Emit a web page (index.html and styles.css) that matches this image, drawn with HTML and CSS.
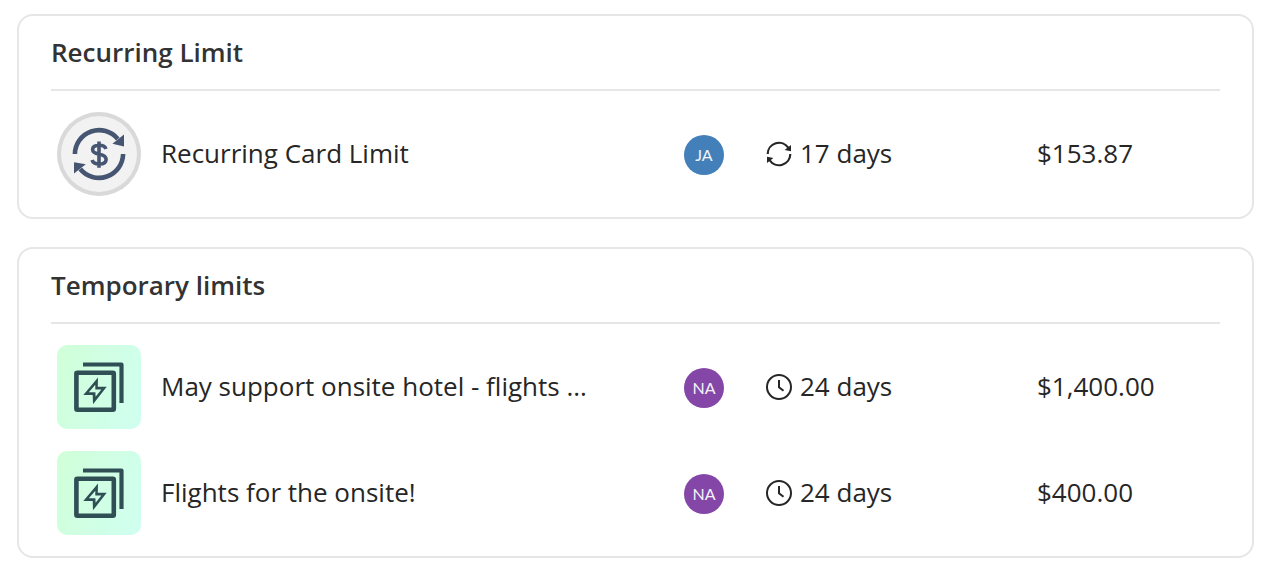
FILE: index.html
```html
<!DOCTYPE html>
<html lang="en">
<head>
<meta charset="utf-8">
<title>Card limits</title>
<meta name="viewport" content="width=device-width, initial-scale=1">
<link rel="stylesheet" href="styles.css">
</head>
<body>
<svg class="sprite" aria-hidden="true">
  <symbol id="cycle" viewBox="0 0 28 28">
    <path d="M2.7 14A11.3 11.3 0 0 1 23.4 7.8M25.3 14A11.3 11.3 0 0 1 4.6 20.2" fill="none" stroke="currentColor" stroke-width="2.2"/>
    <path d="M26 5v6.2l-6.4-1.2zM2 23v-6.2l6.4 1.2z" fill="currentColor"/>
  </symbol>
  <symbol id="clock" viewBox="0 0 28 28">
    <g fill="none" stroke="currentColor" stroke-width="2">
      <circle cx="14" cy="14" r="12"/>
      <path d="M14 7v7.3l4.5 3.5"/>
    </g>
  </symbol>
  <symbol id="stack" viewBox="0 0 84 84">
    <g fill="none" stroke="currentColor">
      <rect x="19.4" y="27.8" width="37.4" height="37" rx="1" stroke-width="4.6"/>
      <path d="M26 19.5H64.5V58" stroke-width="4.2" stroke-linejoin="round"/>
    </g>
    <path d="M41 32.5 40.8 41.8H49.7L36 59.3 35.7 50H26.3ZM38.3 39.7 31.8 47.3H38.4L38.6 51.8 44.4 44.6H38.3Z" fill="currentColor" fill-rule="evenodd"/>
  </symbol>
</svg>
<main class="limits">
  <section class="card">
    <h2 class="card-title" id="recurring">Recurring Limit</h2>
    <div class="card-body">
      <table class="limit-table" aria-labelledby="recurring">
        <colgroup><col><col class="col-owner"><col class="col-days"><col class="col-amount"></colgroup>
        <tr>
          <td><div class="limit-name">
            <span class="tile tile-recurring"><svg viewBox="0 0 84 84">
              <path d="M17.9 42A24.2 24.2 0 0 1 60.8 27M66.1 42A24.2 24.2 0 0 1 23.2 57" fill="none" stroke="currentColor" stroke-width="4.6"/>
              <path d="M67 22.5V34.5L55.4 31.8zM17 61.5V50.2L28.8 52.2z" fill="currentColor"/>
              <path d="M42 29.5V55.8M48.9 36.9C48.2 34.4 45.5 33.2 42.2 33.2 38.3 33.2 35.6 34.7 35.6 37.6 35.6 40.4 38.3 41.5 42.2 42.3 46.4 43.1 49.1 44.3 49.1 47.4 49.1 50.4 46.2 52 42.2 52 38.4 52 35.8 50.4 35.1 47.9" fill="none" stroke="currentColor" stroke-width="3.6"/>
            </svg></span>
            <span class="text">Recurring Card Limit</span>
          </div></td>
          <td><span class="avatar avatar-blue">JA</span></td>
          <td><div class="days"><svg><use href="#cycle"/></svg><span class="text">17 days</span></div></td>
          <td><span class="text">$153.87</span></td>
        </tr>
      </table>
    </div>
  </section>
  <section class="card">
    <h2 class="card-title" id="temporary">Temporary limits</h2>
    <div class="card-body">
      <table class="limit-table" aria-labelledby="temporary">
        <colgroup><col><col class="col-owner"><col class="col-days"><col class="col-amount"></colgroup>
        <tr>
          <td><div class="limit-name">
            <span class="tile tile-temporary"><svg><use href="#stack"/></svg></span>
            <span class="text">May support onsite hotel - flights ...</span>
          </div></td>
          <td><span class="avatar avatar-purple">NA</span></td>
          <td><div class="days"><svg><use href="#clock"/></svg><span class="text">24 days</span></div></td>
          <td><span class="text">$1,400.00</span></td>
        </tr>
        <tr>
          <td><div class="limit-name">
            <span class="tile tile-temporary"><svg><use href="#stack"/></svg></span>
            <span class="text">Flights for the onsite!</span>
          </div></td>
          <td><span class="avatar avatar-purple">NA</span></td>
          <td><div class="days"><svg><use href="#clock"/></svg><span class="text">24 days</span></div></td>
          <td><span class="text">$400.00</span></td>
        </tr>
      </table>
    </div>
  </section>
</main>
</body>
</html>
```
FILE: styles.css
```css
* {
  box-sizing: border-box;
}

body {
  margin: 0;
  background: #fff;
  color: #262626;
  font-family: "Open Sans", sans-serif;
  font-size: 26px;
  line-height: 36px;
}

.sprite {
  display: none;
}

.limits {
  display: flex;
  flex-direction: column;
  gap: 28px;
  padding: 14px 18px 16px 17px;
}

.card {
  border: 2px solid #e6e6e6;
  border-radius: 16px;
  padding: 0 32px;
}

.card-title {
  margin: 0;
  padding: 18px 0 19px;
  border-bottom: 2px solid #e6e6e6;
  color: #333;
  font-size: 26px;
  font-weight: 600;
  line-height: 36px;
}

.card-body {
  padding: 10px 0;
}

.limit-table {
  width: 100%;
  table-layout: fixed;
  border-collapse: collapse;
}

.col-owner {
  width: 81px;
}

.col-days {
  width: 272px;
}

.col-amount {
  width: 183px;
}

.limit-table td {
  padding: 11px 0;
  vertical-align: middle;
}

.limit-name {
  display: flex;
  align-items: center;
  gap: 20px;
  padding-left: 6px;
}

.text {
  display: block;
  padding-bottom: 2px;
  overflow: hidden;
  text-overflow: ellipsis;
  white-space: nowrap;
}

.tile {
  flex: none;
  width: 84px;
  height: 84px;
  overflow: hidden;
}

.tile svg {
  display: block;
  width: 84px;
  height: 84px;
}

.tile-recurring {
  border-radius: 50%;
  background: #f2f2f2;
  box-shadow: inset 0 0 0 4px #d9d9d9;
  color: #465571;
}

.tile-temporary {
  border-radius: 10px;
  background: linear-gradient(110deg, #d0ffd8, #d0fff1);
  color: #2f4f55;
}

.avatar {
  display: flex;
  align-items: center;
  justify-content: center;
  width: 40px;
  height: 40px;
  margin-top: 2px;
  border-radius: 50%;
  color: #f3f3f8;
  font-family: Lato, sans-serif;
  font-size: 16px;
  line-height: 20px;
}

.avatar-blue {
  background: #437fb8;
}

.avatar-purple {
  background: #8447a8;
}

.days {
  display: flex;
  align-items: center;
  gap: 7px;
}

.days svg {
  flex: none;
  width: 28px;
  height: 28px;
}
```
